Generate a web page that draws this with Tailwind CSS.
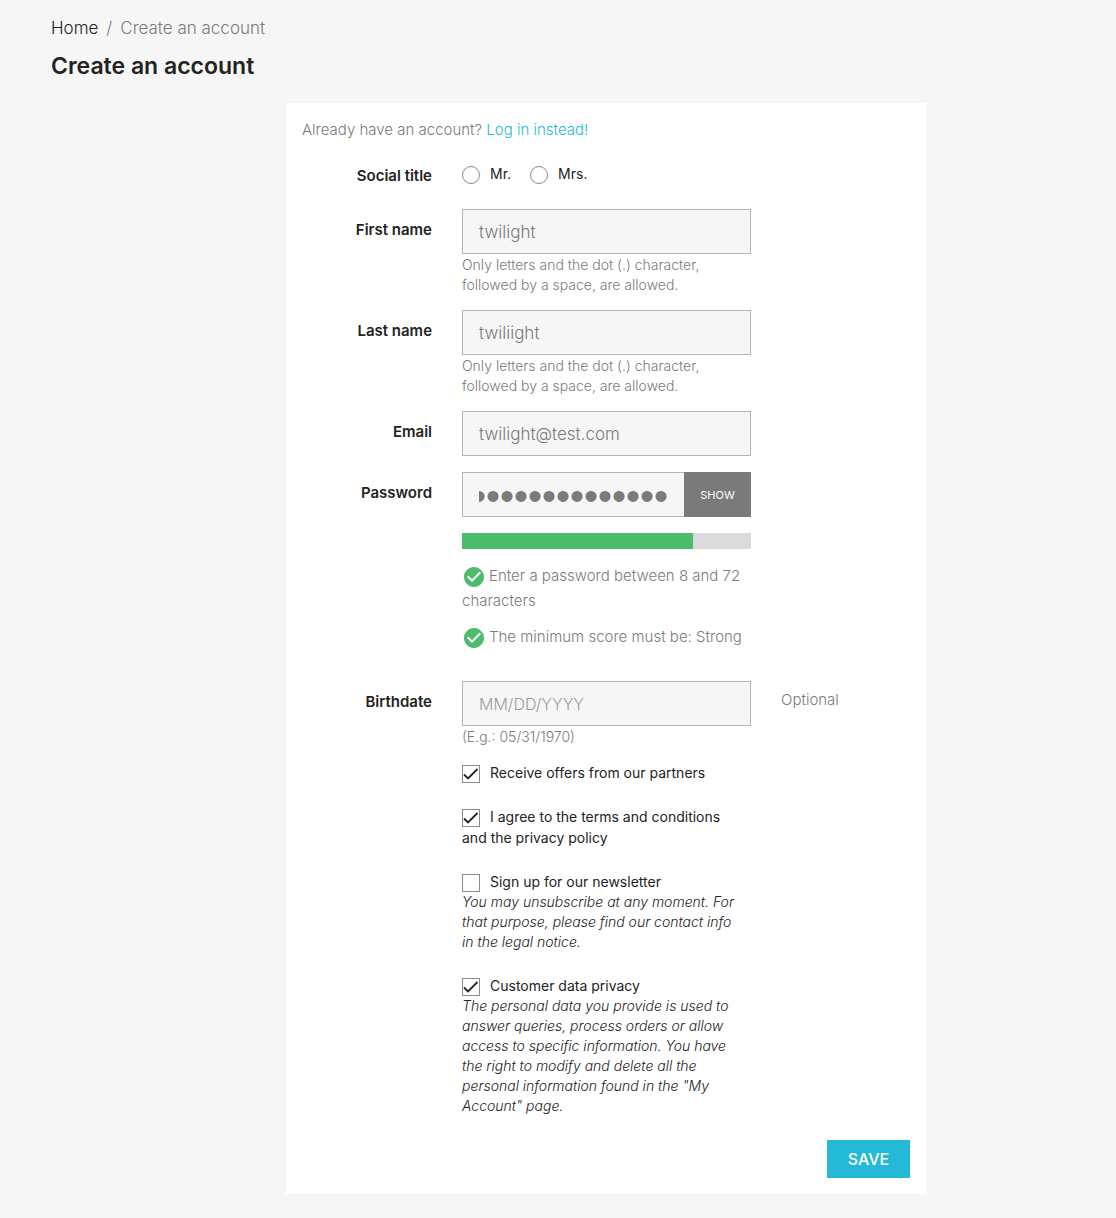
<!DOCTYPE html>
<html lang="en">
<head>
<meta charset="utf-8">
<meta name="viewport" content="width=device-width, initial-scale=1">
<title>Create an account</title>
<script src="https://cdn.jsdelivr.net/npm/@tailwindcss/browser@4"></script>
</head>
<body class="min-h-screen bg-[#f6f6f6] font-['Inter',sans-serif] text-[15px] font-light leading-5 text-[#232323]">
<header class="px-[51px] pt-4">
  <nav aria-label="Breadcrumb">
    <ol class="flex gap-2 text-[17px] leading-6 text-[#7a7a7a]">
      <li><a href="#" class="text-[#232323]">Home</a></li>
      <li aria-hidden="true">/</li>
      <li>Create an account</li>
    </ol>
  </nav>
  <h1 class="mt-3 text-[23px] font-semibold leading-7">Create an account</h1>
</header>

<main class="pb-6 pl-24 pt-[23px]">
  <form class="mx-auto max-w-[640px] bg-white p-4">
    <p class="leading-[22px] text-[#7a7a7a]">Already have an account? <a href="#" class="text-[#24b9d7]">Log in instead!</a></p>

    <fieldset class="mt-[14px] grid grid-cols-[130fr_289fr_129fr] gap-x-[30px]" aria-labelledby="title-label">
      <span id="title-label" class="pt-[11px] text-right font-semibold">Social title</span>
      <div class="flex gap-[19px] pt-[9px] text-sm font-normal">
        <label class="flex gap-[10px]"><input type="radio" name="title" class="mt-[2px] size-[18px] appearance-none rounded-full border border-[#8a8a8a] bg-white checked:border-[5px]">Mr.</label>
        <label class="flex gap-[10px]"><input type="radio" name="title" class="mt-[2px] size-[18px] appearance-none rounded-full border border-[#8a8a8a] bg-white checked:border-[5px]">Mrs.</label>
      </div>
    </fieldset>

    <div class="mt-[23px] grid grid-cols-[130fr_289fr_129fr] gap-x-[30px]">
      <label for="first" class="pt-[11px] text-right font-semibold">First name</label>
      <div class="min-w-0">
        <input id="first" type="text" value="twilight" class="block h-[45px] w-full border border-[#b5b5b5] bg-[#f6f6f6] px-4 text-[17px] text-[#7a7a7a]">
        <p class="pt-px text-sm leading-5 text-[#7a7a7a]">Only letters and the dot (.) character, followed by a space, are allowed.</p>
      </div>
    </div>

    <div class="mt-[15px] grid grid-cols-[130fr_289fr_129fr] gap-x-[30px]">
      <label for="last" class="pt-[11px] text-right font-semibold">Last name</label>
      <div class="min-w-0">
        <input id="last" type="text" value="twiliight" class="block h-[45px] w-full border border-[#b5b5b5] bg-[#f6f6f6] px-4 text-[17px] text-[#7a7a7a]">
        <p class="pt-px text-sm leading-5 text-[#7a7a7a]">Only letters and the dot (.) character, followed by a space, are allowed.</p>
      </div>
    </div>

    <div class="mt-[15px] grid grid-cols-[130fr_289fr_129fr] gap-x-[30px]">
      <label for="email" class="pt-[11px] text-right font-semibold">Email</label>
      <input id="email" type="email" value="twilight@test.com" class="block h-[45px] w-full min-w-0 border border-[#b5b5b5] bg-[#f6f6f6] px-4 text-[17px] text-[#7a7a7a]">
    </div>

    <div class="mt-4 grid grid-cols-[130fr_289fr_129fr] gap-x-[30px]">
      <label for="password" class="pt-[11px] text-right font-semibold">Password</label>
      <div class="min-w-0">
        <div class="flex">
          <input id="password" type="password" value="Twilight#2024x" class="block h-[45px] min-w-0 flex-1 border border-r-0 border-[#b5b5b5] bg-[#f6f6f6] px-4 pt-1 font-['Liberation_Sans',sans-serif] text-[40px] font-normal text-[#7a7a7a]">
          <button type="button" class="w-[67px] bg-[#7a7a7a] text-[11px] font-normal text-white">SHOW</button>
        </div>
        <div class="mt-4 h-4 bg-[#dbdbdb]" role="progressbar" aria-label="Password strength" aria-valuenow="80" aria-valuemin="0" aria-valuemax="100">
          <div class="h-full bg-[#4cbb6c]" style="width:80%"></div>
        </div>
        <p class="mt-[15px] leading-6 text-[#7a7a7a]"><svg class="mr-[3px] inline size-6 align-[-8px]" viewBox="0 0 24 24" fill="#4cbb6c" aria-hidden="true"><path d="M12 2C6.480 2 2 6.480 2 12s4.480 10 10 10 10-4.480 10-10S17.520 2 12 2zm-2 15l-5-5 1.410-1.410L10 14.170l7.590-7.590L19 8l-9 9z"/></svg>Enter a password between 8 and 72 characters</p>
        <p class="mt-3 leading-6 text-[#7a7a7a]"><svg class="mr-[3px] inline size-6 align-[-8px]" viewBox="0 0 24 24" fill="#4cbb6c" aria-hidden="true"><path d="M12 2C6.480 2 2 6.480 2 12s4.480 10 10 10 10-4.480 10-10S17.520 2 12 2zm-2 15l-5-5 1.410-1.410L10 14.170l7.590-7.590L19 8l-9 9z"/></svg>The minimum score must be: Strong</p>
      </div>
    </div>

    <div class="mt-[31px] grid grid-cols-[130fr_289fr_129fr] gap-x-[30px]">
      <label for="birth" class="pt-[11px] text-right font-semibold">Birthdate</label>
      <div class="min-w-0">
        <input id="birth" type="text" placeholder="MM/DD/YYYY" class="block h-[45px] w-full border border-[#b5b5b5] bg-[#f6f6f6] px-4 text-[17px] text-[#7a7a7a] placeholder:text-base placeholder:text-[#9c9c9c]">
        <p class="pt-px text-sm leading-5 text-[#7a7a7a]">(E.g.: 05/31/1970)</p>
      </div>
      <span class="pt-[9px] text-[#7a7a7a]">Optional</span>
    </div>

    <div class="mt-[15px] grid grid-cols-[130fr_289fr_129fr] gap-x-[30px]">
      <div class="col-start-2 flex min-w-0 flex-col gap-[23px] pr-2">
        <label class="block text-sm font-normal leading-[21px]"><span class="relative mr-[10px] inline-block size-[18px] align-[-5px]"><input type="checkbox" checked class="peer block size-[18px] appearance-none border border-[#8a8a8a] bg-white"><svg class="pointer-events-none absolute inset-0 hidden size-[18px] peer-checked:block" viewBox="0 0 18 18" fill="none" stroke="#232323" stroke-width="1.800" aria-hidden="true"><path d="M2 9.500l4 4L15.500 4"/></svg></span>Receive offers from our partners</label>
        <label class="block text-sm font-normal leading-[21px]"><span class="relative mr-[10px] inline-block size-[18px] align-[-5px]"><input type="checkbox" checked class="peer block size-[18px] appearance-none border border-[#8a8a8a] bg-white"><svg class="pointer-events-none absolute inset-0 hidden size-[18px] peer-checked:block" viewBox="0 0 18 18" fill="none" stroke="#232323" stroke-width="1.800" aria-hidden="true"><path d="M2 9.500l4 4L15.500 4"/></svg></span>I agree to the terms and conditions and the privacy policy</label>
        <div>
          <label class="block text-sm font-normal leading-[21px]"><span class="relative mr-[10px] inline-block size-[18px] align-[-5px]"><input type="checkbox" class="peer block size-[18px] appearance-none border border-[#8a8a8a] bg-white"><svg class="pointer-events-none absolute inset-0 hidden size-[18px] peer-checked:block" viewBox="0 0 18 18" fill="none" stroke="#232323" stroke-width="1.800" aria-hidden="true"><path d="M2 9.500l4 4L15.500 4"/></svg></span>Sign up for our newsletter</label>
          <em class="block text-sm leading-5">You may unsubscribe at any moment. For that purpose, please find our contact info in the legal notice.</em>
        </div>
        <div>
          <label class="block text-sm font-normal leading-[21px]"><span class="relative mr-[10px] inline-block size-[18px] align-[-5px]"><input type="checkbox" checked class="peer block size-[18px] appearance-none border border-[#8a8a8a] bg-white"><svg class="pointer-events-none absolute inset-0 hidden size-[18px] peer-checked:block" viewBox="0 0 18 18" fill="none" stroke="#232323" stroke-width="1.800" aria-hidden="true"><path d="M2 9.500l4 4L15.500 4"/></svg></span>Customer data privacy</label>
          <em class="block text-sm leading-5">The personal data you provide is used to answer queries, process orders or allow access to specific information. You have the right to modify and delete all the personal information found in the "My Account" page.</em>
        </div>
      </div>
    </div>

    <div class="mt-6 flex justify-end">
      <button type="submit" class="h-[38px] w-[83px] bg-[#24b9d7] text-base font-medium text-white">SAVE</button>
    </div>
  </form>
</main>
<script>
  // Keep the end of a long password in view.
  const password = document.getElementById('password');
  const showEnd = () => { password.scrollLeft = 1000; };
  window.addEventListener('load', () => { showEnd(); requestAnimationFrame(showEnd); });
</script>
</body>
</html>
